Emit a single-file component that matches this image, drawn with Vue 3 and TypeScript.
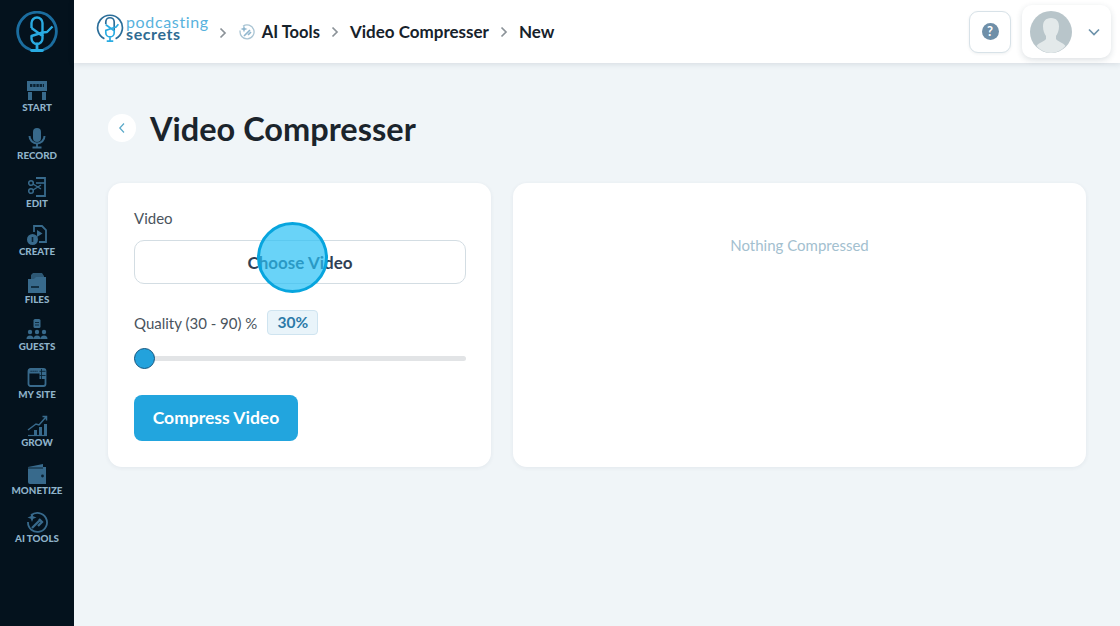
<script setup lang="ts">
const nav: { label: string; id: string }[] = [
  { label: 'START', id: 'start' },
  { label: 'RECORD', id: 'record' },
  { label: 'EDIT', id: 'edit' },
  { label: 'CREATE', id: 'create' },
  { label: 'FILES', id: 'files' },
  { label: 'GUESTS', id: 'guests' },
  { label: 'MY SITE', id: 'site' },
  { label: 'GROW', id: 'grow' },
  { label: 'MONETIZE', id: 'monetize' },
  { label: 'AI TOOLS', id: 'ai' },
]
</script>

<template>
  <div class="app">
    <aside class="side">
      <svg class="side-logo" width="42" height="42" viewBox="0 0 42 42" fill="none">
        <path d="M14 38.500A19.300 19.300 0 1 1 28 38.500" stroke="#1b6d9f" stroke-width="2.800" stroke-linecap="round" />
        <path d="M15.500 17V12a5.500 5.500 0 0 1 11 0v13" stroke="#29abe2" stroke-width="2.400" />
        <path d="M15.500 17l11 8v2.500a5.500 5.500 0 0 1-11 0V25l11-3.500 4.500-.5 5.500-5.500" stroke="#29abe2" stroke-width="2.400" stroke-linejoin="round" />
        <path d="M21 33v6M15.500 39.500h11" stroke="#29abe2" stroke-width="2.800" stroke-linecap="round" />
      </svg>
      <nav class="nav">
        <div v-for="item in nav" :key="item.id" class="nav-item">
          <svg class="nav-icon" width="24" height="22" viewBox="0 0 24 22" fill="#386a8c">
            <template v-if="item.id === 'start'">
              <path d="M2 1h20v10H2z" /><path d="M3 12h4v8H3zM17 12h4v8h-4z" />
              <path d="M5 5.500h14" stroke="#0a2233" stroke-width="3" stroke-dasharray="2.400 .8" />
            </template>
            <template v-else-if="item.id === 'record'">
              <rect x="8" y="0" width="8" height="14" rx="4" />
              <path d="M4.500 8a7.500 7.500 0 0 0 15 0" fill="none" stroke="#386a8c" stroke-width="2" />
              <path d="M12 15v4M7.500 19.500h9" stroke="#386a8c" stroke-width="1.800" />
            </template>
            <template v-else-if="item.id === 'edit'">
              <path d="M11 2h9v18h-9" fill="none" stroke="#386a8c" stroke-width="1.800" />
              <path d="M11 7h9" stroke="#386a8c" stroke-width="1.600" />
              <circle cx="6" cy="7" r="2.300" fill="none" stroke="#386a8c" stroke-width="1.500" />
              <circle cx="6" cy="15" r="2.300" fill="none" stroke="#386a8c" stroke-width="1.500" />
              <path d="M8 8l8 5M8 14l8-5" stroke="#386a8c" stroke-width="1.400" />
            </template>
            <template v-else-if="item.id === 'create'">
              <path d="M9 8V2h8l4 4v12h-7" fill="none" stroke="#386a8c" stroke-width="1.800" />
              <path d="M12 6l5.500 3.500L12 13z" />
              <circle cx="7.500" cy="15.500" r="5.500" />
              <path d="M7.500 13v5" stroke="#0a2233" stroke-width="1.600" />
            </template>
            <template v-else-if="item.id === 'files'">
              <path d="M8 1h9l2 3v3H6V3z" opacity=".8" />
              <path d="M3 7h6l2-2h10v16H3z" />
              <path d="M6 15h8" stroke="#0a2233" stroke-width="1.600" />
            </template>
            <template v-else-if="item.id === 'guests'">
              <rect x="8.500" y="0" width="7" height="9" rx="1.500" />
              <path d="M10 3.500h4M10 6h4" stroke="#0a2233" stroke-width=".9" />
              <circle cx="5" cy="13" r="2.200" /><circle cx="12" cy="13" r="2.200" /><circle cx="19" cy="13" r="2.200" />
              <path d="M1.500 20a3.500 3.500 0 0 1 7 0zM8.500 20a3.500 3.500 0 0 1 7 0zM15.500 20a3.500 3.500 0 0 1 7 0z" />
            </template>
            <template v-else-if="item.id === 'site'">
              <rect x="3.500" y="2" width="17" height="17" rx="2" fill="none" stroke="#386a8c" stroke-width="1.800" />
              <path d="M3.500 2h17v4.500h-17z" />
              <path d="M14.500 6h6v6h-6z" />
              <path d="M5.500 4.200h7" stroke="#0a2233" stroke-width="1.100" stroke-dasharray="1.200 .8" />
              <path d="M16.500 2v10M14.500 4.300h6M14.500 8.500h6" stroke="#0a2233" stroke-width=".9" />
            </template>
            <template v-else-if="item.id === 'grow'">
              <path d="M9 20v-5h3v5zM14 20v-8h3v8zM19 20V9h3v11z" />
              <path d="M3 20.500h19" stroke="#386a8c" stroke-width="1.200" />
              <path d="M3 15l8-6 3 1 7-8M17.500 1.500h4v4" fill="none" stroke="#386a8c" stroke-width="1.500" />
            </template>
            <template v-else-if="item.id === 'monetize'">
              <path d="M3 4l15-3v3h3v17H5a2 2 0 0 1-2-2z" />
              <path d="M3 5h15" stroke="#0a2233" stroke-width="1" />
              <circle cx="17.500" cy="13" r="1.400" fill="#0a2233" />
            </template>
            <template v-else>
              <path d="M6 4.500A9.500 9.500 0 1 1 3 11" fill="none" stroke="#386a8c" stroke-width="1.800" />
              <path d="M7 17l8-8M13 15l4-4-3-3" stroke="#386a8c" stroke-width="2.300" fill="none" />
              <path d="M7 2l1.200 3.300L11.500 6.500 8.200 7.700 7 11 5.800 7.700 2.500 6.500l3.300-1.200z" />
            </template>
          </svg>
          <span class="nav-label">{{ item.label }}</span>
        </div>
      </nav>
    </aside>

    <div class="main">
      <header class="top">
        <div class="brand">
          <svg class="brand-mark" width="28" height="28" viewBox="0 0 30 30" fill="none">
            <path d="M9 26.500A13.300 13.300 0 1 1 21 26.500" stroke="#2a6d99" stroke-width="1.800" />
            <path d="M10.500 11V8.500a4.500 4.500 0 0 1 9 0V18" stroke="#2a6d99" stroke-width="1.800" />
            <path d="M10.500 11.500l9 6.500v2a4.500 4.500 0 0 1-9 0v-2.500l9-3 2-.5 2.500-3" stroke="#29abe2" stroke-width="1.800" />
            <path d="M15 25v4M11.500 29h7" stroke="#29abe2" stroke-width="1.800" />
          </svg>
          <div class="brand-text">
            <span class="brand-a">podcasting</span>
            <span class="brand-b">secrets</span>
          </div>
        </div>
        <div class="crumbs">
          <svg class="chev chev-first" width="10" height="12" viewBox="0 0 10 12" fill="none"><path d="M2.500 1.500 7 6l-4.500 4.500" stroke="#8b9298" stroke-width="1.700" /></svg>
          <svg class="crumb-ai" width="16" height="16" viewBox="0 0 16 16" fill="none">
            <path d="M4 2.200A7 7 0 1 1 1.200 6.500" stroke="#a9c4d3" stroke-width="1.300" />
            <path d="M5 12l6-6M9 11l3-3" stroke="#8fb6ce" stroke-width="1.700" />
            <path d="M5 1.500l.9 2.600L8.500 5l-2.600.9L5 8.500l-.9-2.600L1.500 5l2.600-.9z" fill="#8fb6ce" />
          </svg>
          <span class="crumb crumb-short">AI Tools</span>
          <svg class="chev" width="10" height="12" viewBox="0 0 10 12" fill="none"><path d="M2.500 1.500 7 6l-4.500 4.500" stroke="#8b9298" stroke-width="1.700" /></svg>
          <span class="crumb">Video Compresser</span>
          <svg class="chev" width="10" height="12" viewBox="0 0 10 12" fill="none"><path d="M2.500 1.500 7 6l-4.500 4.500" stroke="#8b9298" stroke-width="1.700" /></svg>
          <span class="crumb">New</span>
        </div>
        <div class="top-right">
          <button class="help" type="button" aria-label="Help">
            <span class="help-dot">?</span>
          </button>
          <div class="user">
            <svg width="42" height="42" viewBox="0 0 42 42">
              <circle cx="21" cy="21" r="21" fill="#b8c5ca" />
              <path d="M21 7c5.500 0 8 3.500 8 8.500 0 4-1.500 7.500-3 9.500v3c2 2.500 7 3.500 9.500 7A21 21 0 0 1 21 42a21 21 0 0 1-14.500-7c2.500-3.500 7.500-4.500 9.500-7v-3c-1.500-2-3-5.500-3-9.500C13 10.500 15.500 7 21 7z" fill="#e3e9ea" />
            </svg>
            <svg width="12" height="8" viewBox="0 0 12 8" fill="none"><path d="M1 1.500l5 5 5-5" stroke="#6e93ab" stroke-width="1.700" /></svg>
          </div>
        </div>
      </header>

      <main class="content">
        <div class="title-row">
          <button class="back" type="button" aria-label="Back">
            <svg width="8" height="12" viewBox="0 0 8 12" fill="none"><path d="M6 1.500 1.800 6 6 10.500" stroke="#5aa9c9" stroke-width="1.200" /></svg>
          </button>
          <h1 class="title">Video Compresser</h1>
        </div>
        <div class="cards">
          <section class="card form">
            <label class="field-label">Video</label>
            <div class="chooser">Choose Video</div>
            <div class="quality">
              <span class="field-label">Quality (30 - 90) %</span>
              <span class="badge">30%</span>
            </div>
            <div class="slider"><span class="thumb"></span></div>
            <button class="compress" type="button">Compress Video</button>
          </section>
          <section class="card result">
            <span class="empty">Nothing Compressed</span>
          </section>
        </div>
      </main>
    </div>
    <div class="spot"></div>
  </div>
</template>

<style>
html, body { margin: 0; padding: 0; }
</style>

<style scoped>
.app {
  position: relative;
  display: flex;
  width: 1120px;
  height: 626px;
  overflow: hidden;
  background: #f0f5f8;
  font-family: Lato, "Noto Sans", sans-serif;
  color: #3c4650;
}
.side {
  flex: none;
  width: 74px;
  background: #04121d;
  display: flex;
  flex-direction: column;
  align-items: center;
  padding-top: 11px;
  box-sizing: border-box;
}
.side-logo { display: block; }
.nav {
  display: flex;
  flex-direction: column;
  align-items: center;
  margin-top: 27px;
}
.nav-item {
  height: 47.900px;
  width: 74px;
  display: flex;
  flex-direction: column;
  align-items: center;
}
.nav-icon { display: block; }
.nav-label {
  margin-top: -1px;
  font-size: 9.800px;
  line-height: 13px;
  font-weight: 900;
  color: #8fb3ca;
  white-space: nowrap;
}
.main {
  flex: 1;
  min-width: 0;
  display: flex;
  flex-direction: column;
}
.top {
  flex: none;
  height: 63px;
  background: #fff;
  box-shadow: 0 1px 6px rgba(40, 60, 80, 0.14);
  display: flex;
  align-items: center;
  padding: 0 9px 0 22px;
  position: relative;
}
.brand {
  display: flex;
  align-items: center;
  margin-top: -7px;
}
.brand-mark { margin-right: 2px; }
.brand-text {
  display: flex;
  flex-direction: column;
  line-height: 12.500px;
}
.brand-a {
  font-size: 16px;
  color: #57b2dd;
  letter-spacing: 0.65px;
}
.brand-b {
  font-size: 16px;
  color: #2f6b92;
  font-weight: 700;
  letter-spacing: 0.6px;
}
.crumbs {
  display: flex;
  align-items: center;
  margin-left: 9px;
}
.chev { margin: 0 10px; flex: none; }
.chev-first { margin: 2px 11px 0 0; }
.crumb-ai { margin: 0 7px 0 0; }
.crumb {
  font-size: 17px;
  font-weight: 700;
  color: #17222b;
  white-space: nowrap;
}
.crumb-short { font-size: 16.500px; }
.top-right {
  margin-left: auto;
  display: flex;
  align-items: center;
  gap: 11px;
}
.help {
  width: 42px;
  height: 42px;
  padding: 0;
  border: 1px solid #d8e2e8;
  border-radius: 9px;
  background: #fff;
  box-shadow: 0 1px 3px rgba(40, 60, 80, 0.08);
  display: flex;
  align-items: center;
  justify-content: center;
}
.help-dot {
  width: 17px;
  height: 17px;
  border-radius: 50%;
  background: #6f8fa8;
  color: #fff;
  font: 700 13px/17px Lato, sans-serif;
  text-align: center;
}
.user {
  width: 89px;
  height: 53px;
  box-sizing: border-box;
  padding: 0 11px 0 8px;
  border-radius: 10px;
  background: #fff;
  box-shadow: 0 2px 6px rgba(40, 60, 80, 0.16);
  display: flex;
  align-items: center;
  justify-content: space-between;
}
.content {
  flex: 1;
  padding: 47px 34px 0;
}
.title-row {
  display: flex;
  align-items: center;
  gap: 14px;
  height: 36px;
}
.back {
  width: 28px;
  height: 28px;
  padding: 0;
  border: none;
  border-radius: 50%;
  background: #fff;
  display: flex;
  align-items: center;
  justify-content: center;
}
.title {
  margin: 2px 0 0;
  font-size: 32.500px;
  line-height: 36px;
  font-weight: 700;
  color: #1b242c;
}
.cards {
  display: flex;
  gap: 22px;
  margin-top: 37px;
}
.card {
  height: 284px;
  background: #fff;
  border-radius: 14px;
  box-shadow: 0 1px 4px rgba(40, 60, 80, 0.07);
  box-sizing: border-box;
}
.form {
  width: 383px;
  flex: none;
  padding: 26px 25px 0 26px;
  display: flex;
  flex-direction: column;
}
.field-label {
  font-size: 15px;
  line-height: 18px;
  color: #4a545d;
  white-space: nowrap;
}
.chooser {
  margin-top: 13px;
  height: 44px;
  box-sizing: border-box;
  padding-top: 1px;
  border: 1px solid #d3dde3;
  border-radius: 10px;
  display: flex;
  align-items: center;
  justify-content: center;
  font-size: 17px;
  font-weight: 700;
  color: #2f3f55;
}
.quality {
  margin-top: 26px;
  display: flex;
  align-items: center;
  gap: 10px;
}
.badge {
  width: 51px;
  height: 25px;
  box-sizing: border-box;
  border: 1px solid #cfe4f0;
  border-radius: 4px;
  background: #e9f4fa;
  color: #2c7aa8;
  font-size: 15.500px;
  font-weight: 700;
  line-height: 23px;
  text-align: center;
}
.slider {
  position: relative;
  margin-top: 21px;
  height: 5px;
  background: #e2e4e6;
  border-radius: 3px;
}
.thumb {
  position: absolute;
  left: 0;
  top: -8px;
  width: 21px;
  height: 21px;
  box-sizing: border-box;
  border-radius: 50%;
  border: 1px solid #14567f;
  background: #23a2dc;
}
.compress {
  margin-top: 34px;
  width: 164px;
  height: 46px;
  padding: 0 0 2px;
  border: none;
  border-radius: 8px;
  background: #22a5de;
  color: #fff;
  font-family: inherit;
  font-size: 17.500px;
  font-weight: 700;
}
.result {
  flex: 1;
  display: flex;
  justify-content: center;
  padding-top: 53px;
}
.empty {
  font-size: 15px;
  line-height: 18px;
  color: #a3c0cf;
}
.spot {
  position: absolute;
  left: 257px;
  top: 222px;
  width: 71px;
  height: 71px;
  box-sizing: border-box;
  border-radius: 50%;
  border: 3px solid #07a5de;
  background: rgba(42, 192, 245, 0.7);
}
</style>
